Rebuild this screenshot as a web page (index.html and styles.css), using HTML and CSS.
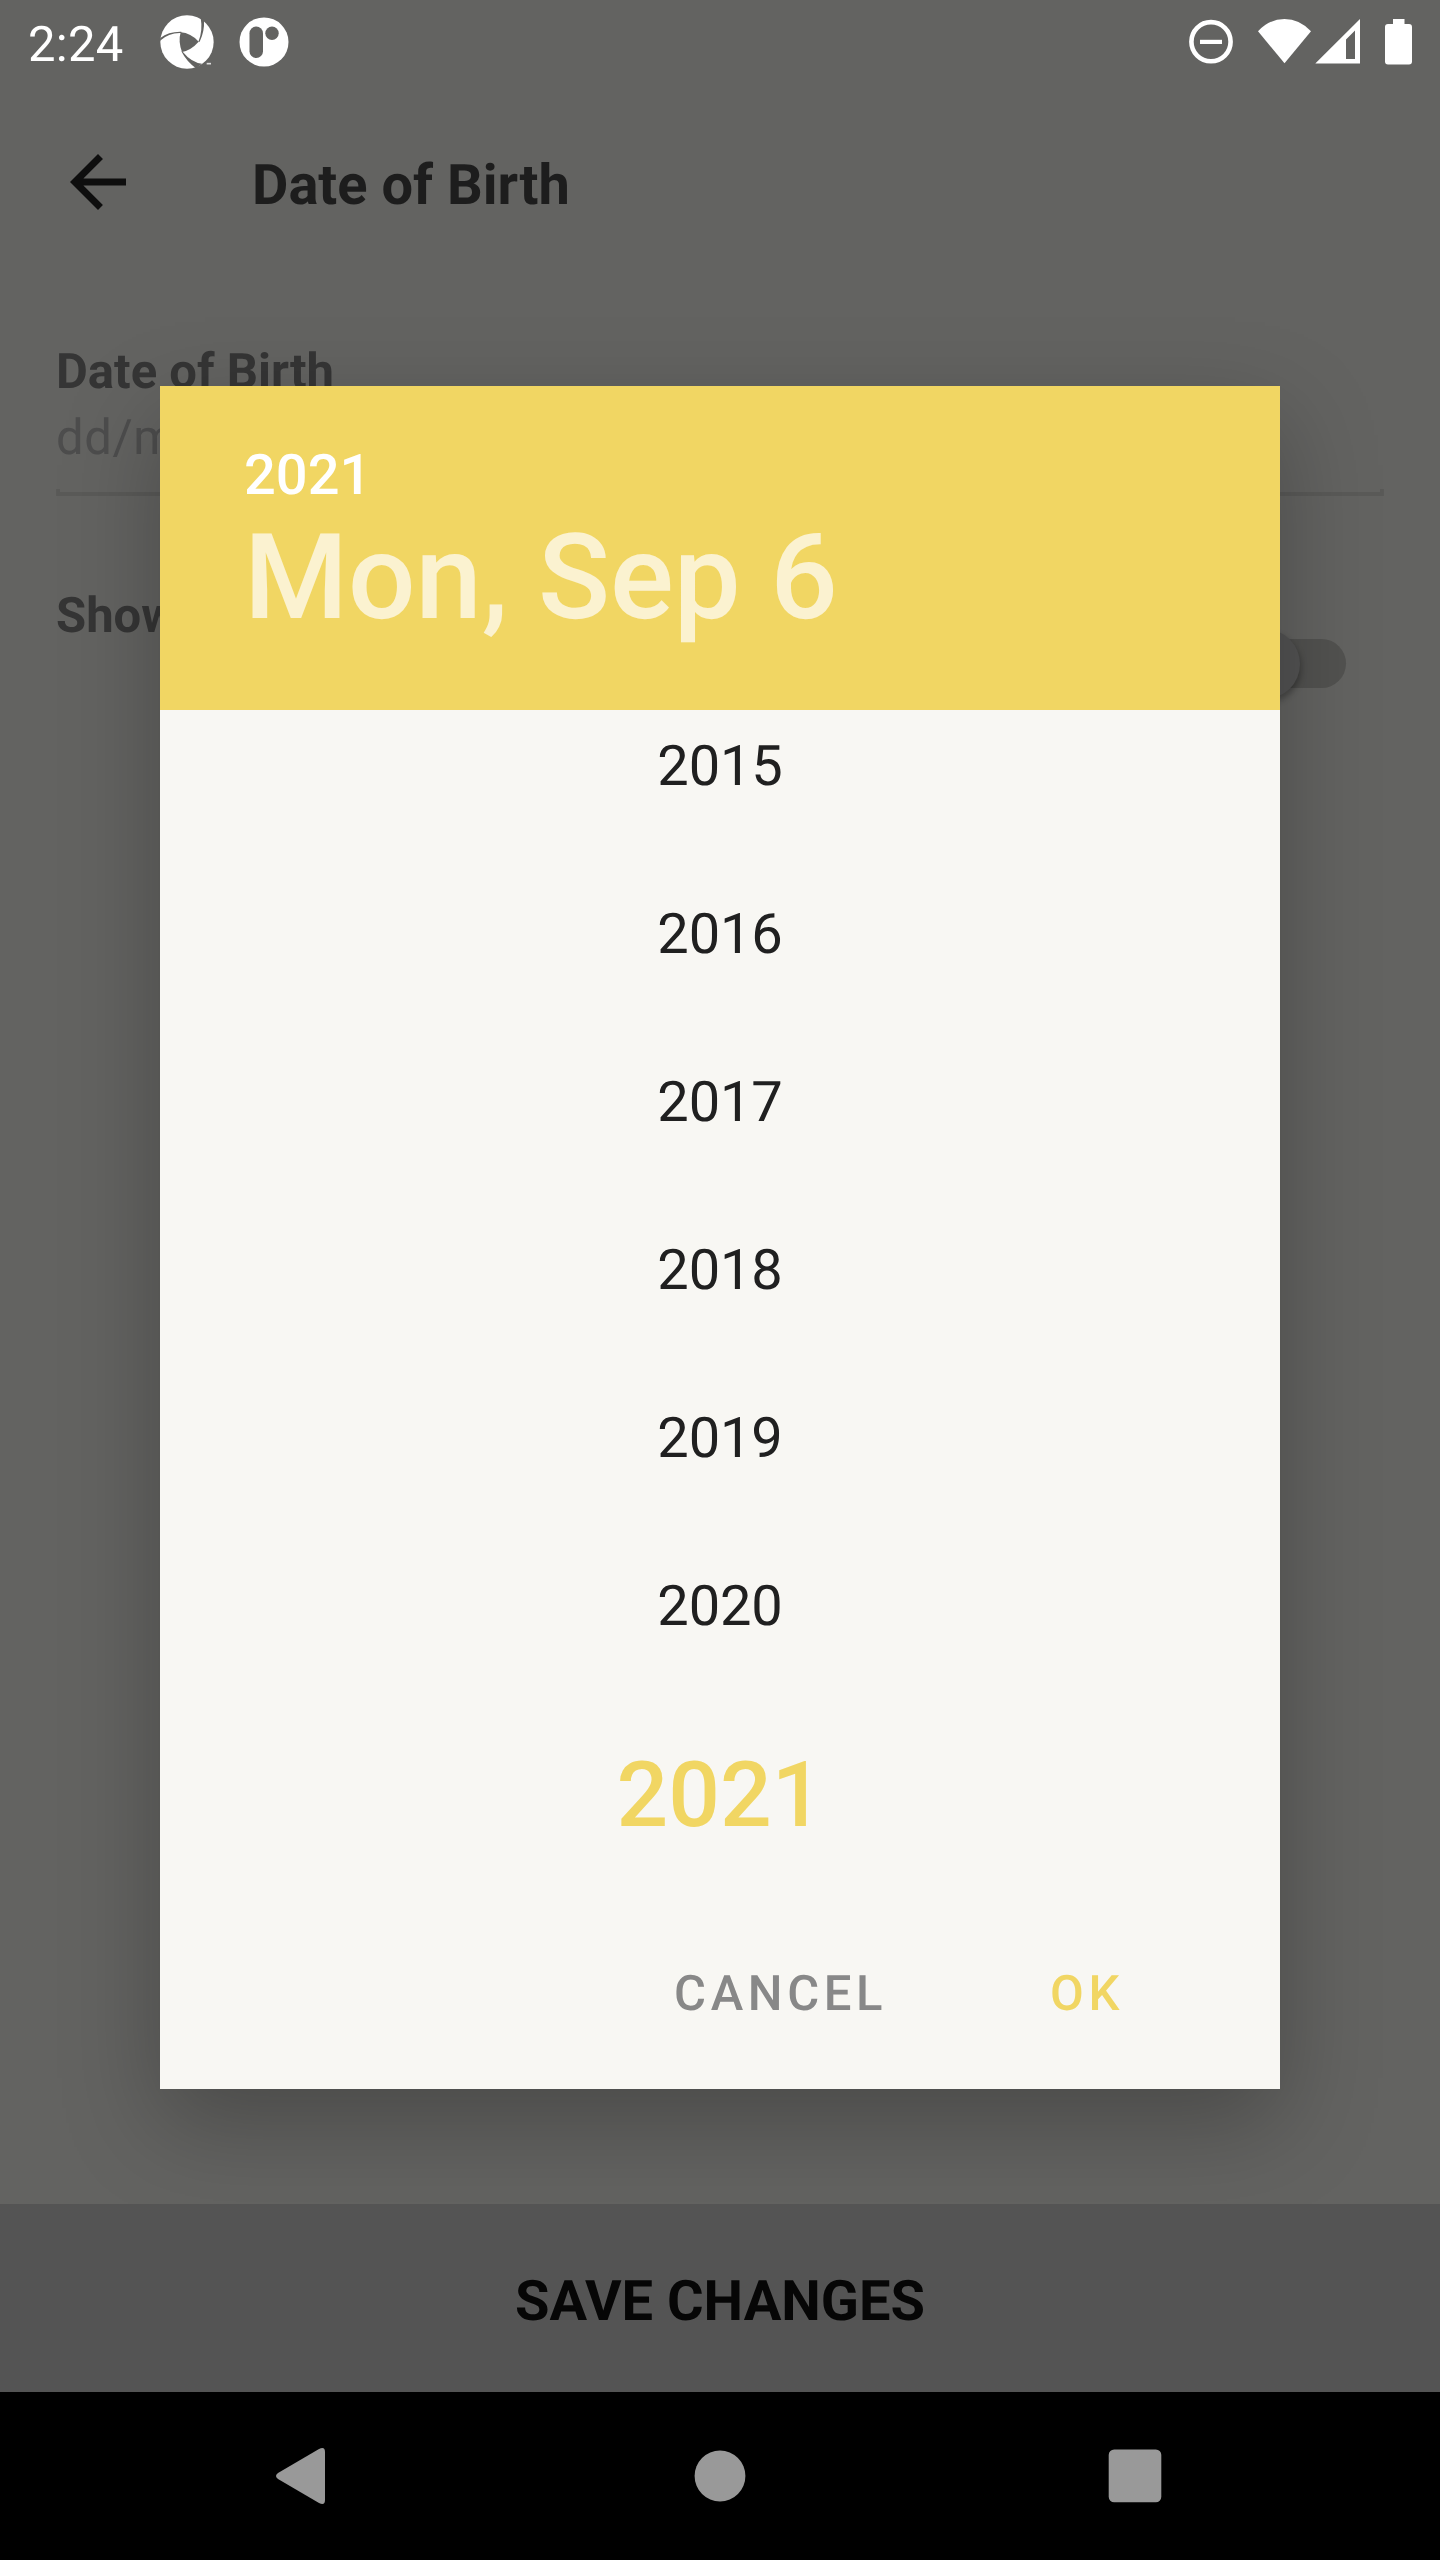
FILE: index.html
```html
<!DOCTYPE html>
<html lang="en">
<head>
<meta charset="utf-8">
<title>Date of Birth</title>
<link rel="stylesheet" href="styles.css">
</head>
<body>
<div class="screen">
  <header class="status">
    <span class="clock">2:24</span>
    <svg class="app-shutter" viewBox="0 0 162 162" width="54" height="54">
      <circle cx="81" cy="81" r="80" fill="#fff"/>
      <path class="cut" d="M62 52Q92 54 116 80Q94 105 66 111Q54 79 62 52Z"/>
      <path class="cut" d="M1 69Q26 49 64 50L64 54Q28 52 0 77Z"/>
      <path class="cut" d="M122 8Q129 47 115 81L119 80Q134 50 132 16Z"/>
      <path class="cut" d="M64 109Q80 140 108 160L126 146Q94 142 68 110Z"/>
      <path class="mark" d="M140 146h13"/>
    </svg>
    <svg class="app-round" viewBox="0 0 50 50" width="50" height="50">
      <circle cx="25" cy="25" r="24.5" fill="#fff"/>
      <rect class="cut" x="10.5" y="9.5" width="13.5" height="31.5" rx="6.75"/>
      <circle class="cut" cx="33" cy="16.3" r="6.7"/>
    </svg>
    <svg class="system" viewBox="1180 0 260 90" width="260" height="90" fill="#fff">
      <circle cx="1211" cy="41.7" r="19.6" fill="none" stroke="#fff" stroke-width="4.6"/>
      <path d="M1200 39.8h22v4.2h-22z"/>
      <path d="M1284.5 63.3L1258 31.3Q1269.500 19 1284.500 19T1311 31.300Z"/>
      <path fill-rule="evenodd" d="M1315.300 63.500L1360 19V63.500ZM1346 39.500V59H1355V30.500Z"/>
      <path d="M1393 19h11.500v5h4.500a3 3 0 0 1 3 3v34.500a3 3 0 0 1-3 3h-21a3 3 0 0 1-3-3V27a3 3 0 0 1 3-3h5z"/>
    </svg>
  </header>
  <div class="appbar">
    <svg viewBox="0 0 24 24" width="84" height="84" fill="#0e0e0e"><path d="M20 11H7.830l5.590-5.590L12 4l-8 8 8 8 1.410-1.410L7.830 13H20v-2z"/></svg>
    <h1 class="title">Date of Birth</h1>
  </div>
  <main class="form">
    <div class="label">Date of Birth</div>
    <div class="input">dd/mm</div>
    <div class="setting">
      <div class="label">Show</div>
      <div class="switch"><div class="thumb"></div></div>
    </div>
  </main>
  <div class="save">SAVE CHANGES</div>
  <nav class="nav">
    <svg viewBox="0 0 1440 168" width="1440" height="168" fill="#999">
      <path d="M278 81L319 57Q325 54 325 60V108Q325 114 319 111L278 87Q274 84 278 81Z"/>
      <circle cx="720" cy="84" r="25.400"/>
      <rect x="1108.700" y="57.500" width="52.600" height="52.800" rx="5.500"/>
    </svg>
  </nav>
  <section class="dialog">
    <div class="dialog-head">
      <div class="year">2021</div>
      <div class="date">Mon, Sep 6</div>
    </div>
    <div class="years">
      <div class="option">2015</div>
      <div class="option">2016</div>
      <div class="option">2017</div>
      <div class="option">2018</div>
      <div class="option">2019</div>
      <div class="option">2020</div>
      <div class="option selected">2021</div>
    </div>
    <div class="actions">
      <span class="cancel">CANCEL</span>
      <span class="ok">OK</span>
    </div>
  </section>
</div>
</body>
</html>
```
FILE: styles.css
```css
* { box-sizing: border-box; }
body { margin: 0; font-family: Roboto, sans-serif; text-rendering: geometricPrecision; }
.screen {
  position: relative;
  width: 1440px;
  height: 2560px;
  overflow: hidden;
  display: flex;
  flex-direction: column;
  background: #636361;
}
.status { display: flex; height: 84px; flex: none; }
.clock { width: 133px; padding-left: 28px; font-size: 49px; line-height: 90px; letter-spacing: .3px; color: #fff; }
.app-shutter { margin: 15px 0 0 27px; }
.app-round { margin: 17px 0 0 25px; }
.system { margin-left: auto; }
.cut { fill: #636361; }
.mark { stroke: #ddd; stroke-width: 5; }
.appbar { display: flex; align-items: center; height: 196px; padding: 0 56px; flex: none; }
.title { margin: 5px 0 0 112px; font-size: 56px; line-height: 66px; font-weight: 700; color: #1d1d1d; }
.form { flex: 1; padding: 63px 56px 0; }
.label { font-size: 49px; line-height: 58px; font-weight: 700; color: #353535; }
.input {
  position: relative;
  height: 95px;
  padding-top: 8px;
  font-size: 49px;
  line-height: 58px;
  letter-spacing: .6px;
  color: #4d4d4d;
  border: 0 solid #5a5a58;
  border-bottom-width: 4px;
}
.input::after {
  content: "";
  position: absolute;
  inset: auto 0 0;
  height: 3px;
  border: solid #5a5a58;
  border-width: 0 4px;
}
.setting { display: flex; justify-content: space-between; padding: 91px 38px 0 0; }
.switch { width: 119px; height: 49px; margin-top: 52px; border-radius: 25px; background: #525250; }
.thumb { width: 70px; height: 70px; margin: -10px 0 0 3px; border-radius: 50%; background: #535353; box-shadow: 1px 4px 6px rgba(0,0,0,.3); }
.save {
  position: relative;
  z-index: 1;
  height: 188px;
  flex: none;
  padding-top: 64px;
  background: #545454;
  color: #060606;
  text-align: center;
  font-size: 56px;
  line-height: 66px;
  font-weight: 700;
}
.nav { height: 168px; flex: none; background: #000; }
.nav svg { display: block; }
.dialog {
  position: absolute;
  left: 160px;
  top: 386px;
  width: 1120px;
  height: 1703px;
  display: flex;
  flex-direction: column;
  background: #f8f7f3;
  box-shadow: 0 34px 90px rgba(0,0,0,.26);
}
.dialog-head { height: 324px; flex: none; padding: 56px 84px 0; background: #f1d663; }
.year { font-size: 56px; line-height: 66px; font-weight: 500; color: #fff; }
.date { font-size: 119px; line-height: 141px; font-weight: 500; color: #fbf2d0; }
.years { height: 1190px; flex: none; overflow: hidden; text-align: center; }
.option { height: 168px; line-height: 168px; font-size: 56px; letter-spacing: -.15px; color: #202020; }
.option:first-child { margin-top: -28px; }
.selected { height: 210px; line-height: 212px; font-size: 91px; font-weight: 500; letter-spacing: 0; color: #f1d663; }
.actions {
  flex: 1;
  display: flex;
  align-items: center;
  justify-content: flex-end;
  gap: 163px;
  padding: 0 156px 3px 0;
  font-size: 49px;
  font-weight: 500;
  letter-spacing: 4.600px;
}
.cancel { color: #888; }
.ok { color: #f1d663; }
```
